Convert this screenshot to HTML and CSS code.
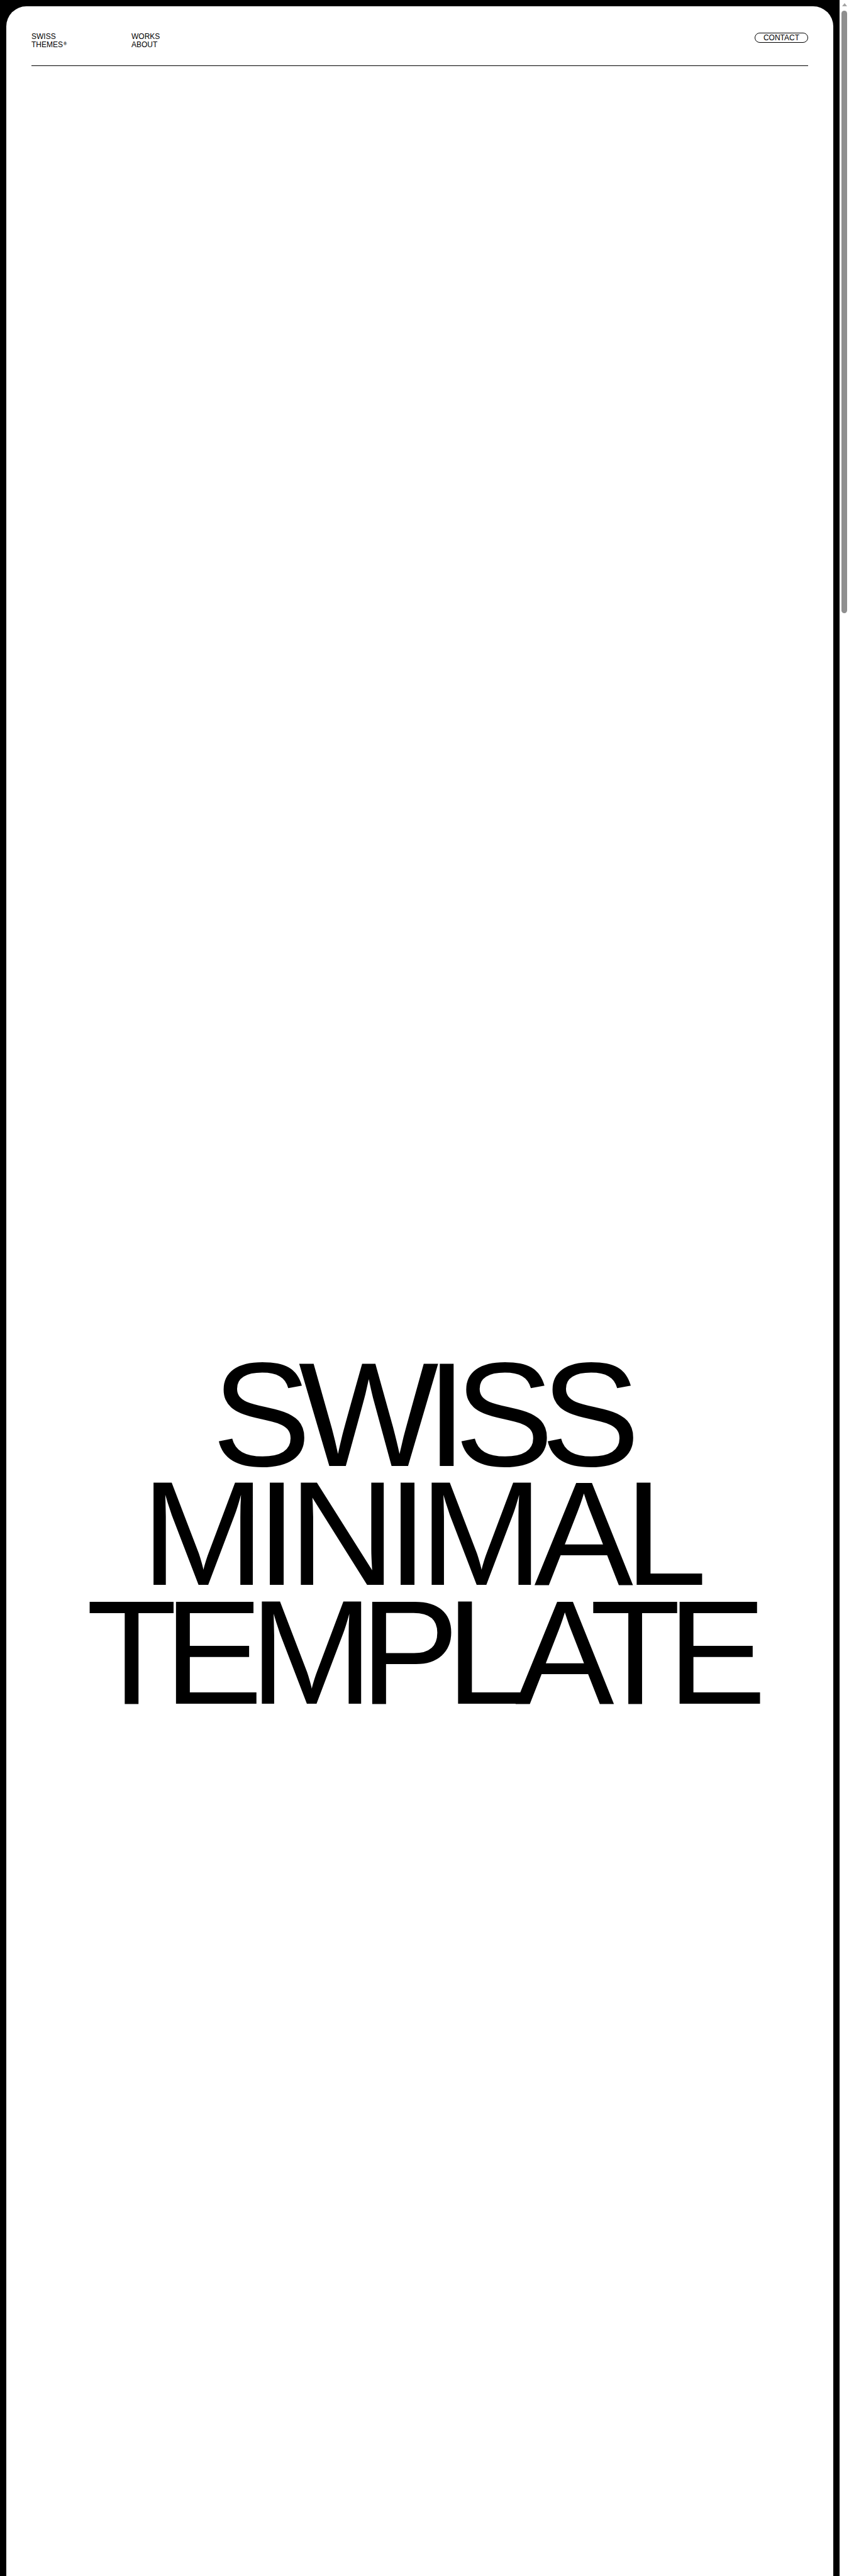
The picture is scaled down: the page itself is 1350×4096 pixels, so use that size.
FILE: index.html
```html
<!DOCTYPE html>
<html lang="en">
<head>
  <meta charset="UTF-8">
  <meta name="viewport" content="width=device-width, initial-scale=1.0">
  <title>Swiss Themes</title>
  <link rel="stylesheet" href="styles.css">
</head>
<body>
  <div class="frame">
    <header class="topbar">
      <a class="brand" href="#">SWISS<br>THEMES<sup>&reg;</sup></a>
      <nav class="menu">
        <a href="#">WORKS</a>
        <a href="#">ABOUT</a>
      </nav>
      <a class="pill" href="#">CONTACT</a>
    </header>

    <section class="hero">
      <h1 class="title">
        <span class="line">SWISS</span>
        <span class="line line-open">MINIMAL</span>
        <span class="line line-tight">TEMPLATE</span>
      </h1>
    </section>
  </div>

  <!-- window scroll rail -->
  <div class="rail" aria-hidden="true">
    <span class="rail-arrow"></span>
    <span class="rail-thumb"></span>
  </div>
</body>
</html>
```

FILE: styles.css
```css
html, body {
  margin: 0;
}
body {
  background-color: #000;
  padding: 10px 25px 0 10px;
  font-family: 'Liberation Sans', Arial, sans-serif;
  color: #000;
}
a {
  color: inherit;
  text-decoration: none;
}
.frame {
  background-color: #fff;
  border-radius: 32px 32px 0 0;
  min-height: 4200px;
  padding: 0 40px;
}
.topbar {
  display: grid;
  grid-template-columns: 159px 1fr auto;
  align-items: start;
  padding: 42px 0 26px;
  border-bottom: 1px solid #000;
  font-size: 12px;
  line-height: 1.1;
}
.brand sup {
  font-size: 7px;
  font-weight: bold;
  vertical-align: top;
  position: relative;
  top: 1px;
  margin-left: 1px;
}
.menu {
  display: flex;
  flex-direction: column;
}
.pill {
  display: inline-block;
  border: 1px solid #000;
  border-radius: 8px;
  padding: 0 13px;
  line-height: 14px;
}
.hero {
  padding-top: 2050px;
}
.title {
  margin: 0;
  font-size: 236px;
  font-weight: 400;
  line-height: 189px;
  letter-spacing: -20px;
  text-align: center;
}
.title .line {
  display: block;
}
/* optical tracking per line */
.title .line-open {
  letter-spacing: -14px;
}
.title .line-tight {
  letter-spacing: -21px;
}

/* scroll rail on the right edge */
.rail {
  position: fixed;
  top: 0;
  right: 0;
  bottom: 0;
  width: 15px;
  background-color: #fff;
  display: flex;
  flex-direction: column;
  align-items: center;
  padding-top: 5px;
  box-sizing: border-box;
}
.rail-arrow {
  width: 0;
  height: 0;
  border-left: 4px solid transparent;
  border-right: 4px solid transparent;
  border-bottom: 5px solid #a3a3a3;
}
.rail-thumb {
  margin-top: 7px;
  width: 9px;
  height: 958px;
  border-radius: 5px;
  background-color: #8f8f8f;
}
```
